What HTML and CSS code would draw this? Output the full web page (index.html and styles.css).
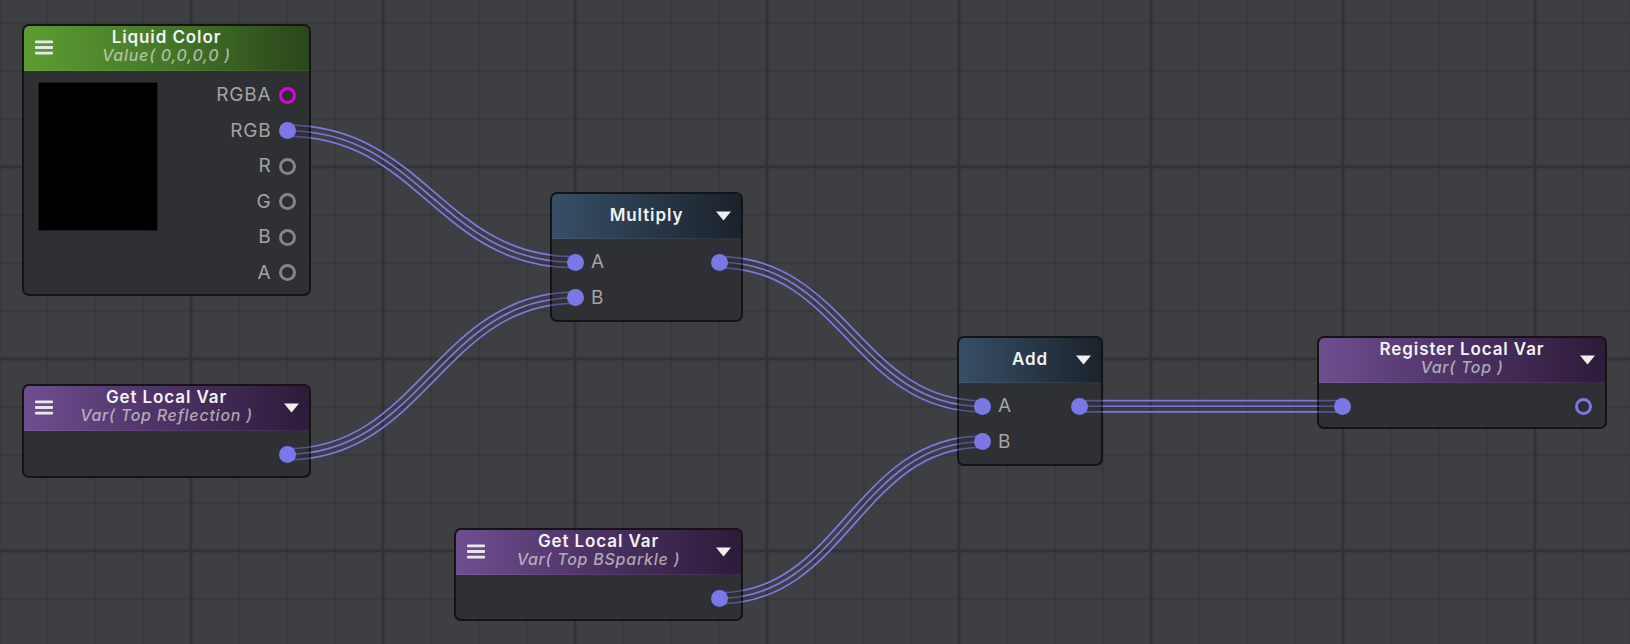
FILE: index.html
```html
<!DOCTYPE html>
<html>
<head>
<meta charset="utf-8">
<title>Shader Graph</title>
<link rel="stylesheet" href="styles.css">
</head>
<body>
<div class="canvas">
  <svg class="wires" width="1630" height="644" viewBox="0 0 1630 644">
    <defs>
      <path id="w1" d="M287 130.75 C422 130.75 440 262.25 575 262.25"/>
      <path id="w2" d="M287 454.25 C422 454.25 440 297.75 575 297.75"/>
      <path id="w3" d="M719 262.25 C843 262.25 858 406.25 982 406.25"/>
      <path id="w4" d="M719 598.25 C843 598.25 858 441.75 982 441.75"/>
      <path id="w5" d="M1079 406.25 L1342 406.25"/>
      <mask id="wm" maskUnits="userSpaceOnUse" x="0" y="0" width="1630" height="644">
        <g fill="none">
          <g stroke="#fff" stroke-width="12.8">
            <use href="#w1"/><use href="#w2"/><use href="#w3"/><use href="#w4"/><use href="#w5"/>
          </g>
          <g stroke="#000" stroke-width="9.4">
            <use href="#w1"/><use href="#w2"/><use href="#w3"/><use href="#w4"/><use href="#w5"/>
          </g>
          <g stroke="#fff" stroke-width="1.7">
            <use href="#w1"/><use href="#w2"/><use href="#w3"/><use href="#w4"/><use href="#w5"/>
          </g>
        </g>
        <g fill="#000" fill-opacity="0.5">
          <rect x="22" y="24" width="289" height="272"/>
          <rect x="550" y="192" width="193" height="130"/>
          <rect x="957" y="336" width="146" height="130"/>
          <rect x="1317" y="336" width="290" height="93"/>
          <rect x="22" y="384" width="289" height="94"/>
          <rect x="454" y="528" width="289" height="93"/>
        </g>
      </mask>
    </defs>
    <g mask="url(#wm)" fill="none" stroke="#7b78e6" stroke-width="14">
      <use href="#w1"/><use href="#w2"/><use href="#w3"/><use href="#w4"/><use href="#w5"/>
    </g>
  </svg>

  <!-- Liquid Color -->
  <div class="node n-liquid">
    <div class="head head-green">
      <svg class="menu" width="18" height="15" viewBox="0 0 18 15"><rect y="0.4" width="18" height="2.8" rx="1"/><rect y="6.1" width="18" height="2.8" rx="1"/><rect y="11.8" width="18" height="2.8" rx="1"/></svg>
      <div class="titles"><div class="title">Liquid Color</div><div class="sub">Value( 0,0,0,0 )</div></div>
    </div>
    <div class="body body-liquid">
      <div class="swatch"></div>
      <div class="ports">
        <div class="row out"><span class="lbl">RGBA</span><span class="dot ring ring-magenta"></span></div>
        <div class="row out"><span class="lbl">RGB</span><span class="dot"></span></div>
        <div class="row out"><span class="lbl">R</span><span class="dot ring"></span></div>
        <div class="row out"><span class="lbl">G</span><span class="dot ring"></span></div>
        <div class="row out"><span class="lbl">B</span><span class="dot ring"></span></div>
        <div class="row out"><span class="lbl">A</span><span class="dot ring"></span></div>
      </div>
    </div>
  </div>

  <!-- Multiply -->
  <div class="node n-multiply">
    <div class="head head-blue">
      <div class="titles"><div class="title">Multiply</div></div>
      <svg class="caret" width="15" height="10" viewBox="0 0 15 10"><path d="M0 0.5H15L7.5 9.6Z"/></svg>
    </div>
    <div class="body">
      <div class="row both"><span class="pin"><span class="dot"></span><span class="lbl">A</span></span><span class="dot"></span></div>
      <div class="row both"><span class="pin"><span class="dot"></span><span class="lbl">B</span></span></div>
    </div>
  </div>

  <!-- Add -->
  <div class="node n-add">
    <div class="head head-blue">
      <div class="titles"><div class="title">Add</div></div>
      <svg class="caret" width="15" height="10" viewBox="0 0 15 10"><path d="M0 0.5H15L7.5 9.6Z"/></svg>
    </div>
    <div class="body">
      <div class="row both"><span class="pin"><span class="dot"></span><span class="lbl">A</span></span><span class="dot"></span></div>
      <div class="row both"><span class="pin"><span class="dot"></span><span class="lbl">B</span></span></div>
    </div>
  </div>

  <!-- Register Local Var -->
  <div class="node n-register">
    <div class="head head-purple">
      <div class="titles"><div class="title">Register Local Var</div><div class="sub">Var( Top )</div></div>
      <svg class="caret" width="15" height="10" viewBox="0 0 15 10"><path d="M0 0.5H15L7.5 9.6Z"/></svg>
    </div>
    <div class="body">
      <div class="row both"><span class="dot"></span><span class="dot ring ring-blue"></span></div>
    </div>
  </div>

  <!-- Get Local Var 1 -->
  <div class="node n-get1">
    <div class="head head-purple">
      <svg class="menu" width="18" height="15" viewBox="0 0 18 15"><rect y="0.4" width="18" height="2.8" rx="1"/><rect y="6.1" width="18" height="2.8" rx="1"/><rect y="11.8" width="18" height="2.8" rx="1"/></svg>
      <div class="titles"><div class="title">Get Local Var</div><div class="sub">Var( Top Reflection )</div></div>
      <svg class="caret" width="15" height="10" viewBox="0 0 15 10"><path d="M0 0.5H15L7.5 9.6Z"/></svg>
    </div>
    <div class="body">
      <div class="row out"><span class="dot"></span></div>
    </div>
  </div>

  <!-- Get Local Var 2 -->
  <div class="node n-get2">
    <div class="head head-purple">
      <svg class="menu" width="18" height="15" viewBox="0 0 18 15"><rect y="0.4" width="18" height="2.8" rx="1"/><rect y="6.1" width="18" height="2.8" rx="1"/><rect y="11.8" width="18" height="2.8" rx="1"/></svg>
      <div class="titles"><div class="title">Get Local Var</div><div class="sub">Var( Top BSparkle )</div></div>
      <svg class="caret" width="15" height="10" viewBox="0 0 15 10"><path d="M0 0.5H15L7.5 9.6Z"/></svg>
    </div>
    <div class="body">
      <div class="row out"><span class="dot"></span></div>
    </div>
  </div>
</div>
</body>
</html>
```

FILE: styles.css
```css
* { box-sizing: border-box; }

html, body {
  margin: 0;
  padding: 0;
  background: #3e3f43;
}

.canvas {
  position: relative;
  width: 1630px;
  height: 644px;
  overflow: hidden;
  font-family: "Inter", "Noto Sans", sans-serif;
  background-color: #3e3f43;
  background-image:
    linear-gradient(to right, transparent 0, #333437 1px, #2f3033 2px, #333437 3px, transparent 4px),
    linear-gradient(to bottom, transparent 0, #333437 1px, #2f3033 2px, #333437 3px, transparent 4px),
    linear-gradient(to right, transparent 0, #37383b 0.8px, #37383b 2.2px, transparent 3px),
    linear-gradient(to bottom, transparent 0, #37383b 0.8px, #37383b 2.2px, transparent 3px);
  background-size: 192px 100%, 100% 192px, 48px 100%, 100% 48px;
  background-position: 189px 0, 0 165px, 45.5px 0, 0 21.5px;
}

.wires {
  position: absolute;
  left: 0;
  top: 0;
  z-index: 1;
  pointer-events: none;
}

/* ---------- nodes ---------- */
.node {
  position: absolute;
  display: flex;
  flex-direction: column;
  border: 2px solid #141416;
  border-radius: 7px;
  background: #2f3034;
  overflow: hidden;
}

.n-liquid   { left: 22px;   top: 24px;  width: 289px; height: 272px; }
.n-multiply { left: 550px;  top: 192px; width: 193px; height: 130px; }
.n-add      { left: 957px;  top: 336px; width: 146px; height: 130px; }
.n-register { left: 1317px; top: 336px; width: 290px; height: 93px; }
.n-get1     { left: 22px;   top: 384px; width: 289px; height: 94px; }
.n-get2     { left: 454px;  top: 528px; width: 289px; height: 93px; }

.head {
  flex: none;
  height: 45px;
  display: grid;
  grid-template-columns: 40px 1fr 40px;
  align-items: center;
  padding-bottom: 3px;
  border-bottom: 1px solid rgba(255, 255, 255, 0.07);
  border-radius: 5px 5px 0 0;
}

.head-green  { background: linear-gradient(to right, #5d9c32 0%, #477c29 45%, #2a461b 100%); }
.head-blue   { background: linear-gradient(to right, #374f66 0%, #2a3b4d 45%, #1b222b 100%); }
.head-purple { background: linear-gradient(to right, #6f4e90 0%, #4f3468 45%, #2d1b39 100%); }

.menu {
  grid-row: 1;
  grid-column: 1;
  justify-self: start;
  margin-left: 11px;
  margin-top: 2px;
  fill: #e8e8e8;
}

.titles {
  grid-row: 1;
  grid-column: 2;
  text-align: center;
  white-space: nowrap;
}

.title {
  font-size: 17px;
  line-height: 18px;
  font-weight: 600;
  letter-spacing: 0.9px;
  color: #f2f2f2;
}

.sub {
  font-size: 16px;
  line-height: 19px;
  font-style: italic;
  font-weight: 500;
  letter-spacing: 0.75px;
  color: rgba(222, 222, 222, 0.7);
}

.caret {
  grid-row: 1;
  grid-column: 3;
  justify-self: end;
  margin-right: 10px;
  margin-top: 2px;
  fill: #f0f0f0;
}

/* ---------- body / ports ---------- */
.body {
  flex: 1;
  padding-top: 5.5px;
}

.body-liquid {
  display: flex;
  padding-top: 6.5px;
  padding-left: 14px;
}

.swatch {
  flex: none;
  width: 120px;
  height: 149px;
  margin-top: 4.5px;
  background: #000;
  border: 1px solid #1d1d1f;
}

.ports {
  flex: 1;
}

.row {
  height: 35.5px;
  display: flex;
  align-items: center;
}

.row.out {
  justify-content: flex-end;
  padding-right: 13.5px;
}

.row.both {
  justify-content: space-between;
  padding-left: 14.5px;
  padding-right: 13.5px;
}

.pin {
  display: flex;
  align-items: center;
}

.lbl {
  font-size: 19px;
  line-height: 20px;
  letter-spacing: 0.8px;
  color: #a3a3a3;
}

.out .lbl { margin-right: 7px; }
.pin .lbl { margin-left: 7.5px; }

.dot {
  position: relative;
  z-index: 2;
  flex: none;
  width: 17px;
  height: 17px;
  border-radius: 50%;
  background: #7b78e6;
}

.ring {
  background: #2d2e32;
  border: 3px solid #858585;
}

.ring-magenta { border-color: #e200dc; }
.ring-blue    { border-color: #7b78e6; }
```
